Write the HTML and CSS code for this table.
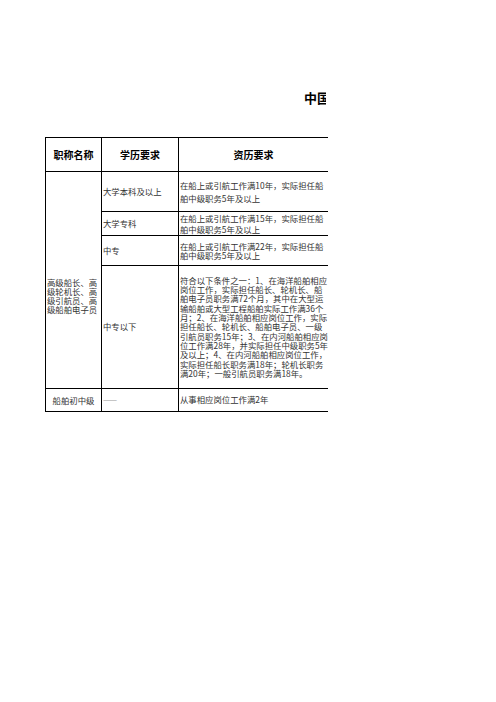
FILE: index.html
```html
<!DOCTYPE html>
<html lang="zh">
<head>
<meta charset="utf-8">
<title>中国船舶船员职称评审条件</title>
<link rel="stylesheet" href="styles.css">
</head>
<body>
<div class="sheet">
  <div class="title">中国船舶船员职称评审条件</div>
  <table class="grid">
    <colgroup>
      <col class="c-name">
      <col class="c-edu">
      <col class="c-exp">
    </colgroup>
    <thead>
      <tr class="r-head">
        <th>职称名称</th>
        <th>学历要求</th>
        <th>资历要求</th>
      </tr>
    </thead>
    <tbody>
      <tr class="r1">
        <td class="name" rowspan="4">高级船长、高<br>级轮机长、高<br>级引航员、高<br>级船舶电子员</td>
        <td class="edu">大学本科及以上</td>
        <td class="exp">在船上或引航工作满10年，实际担任船<br>舶中级职务5年及以上</td>
      </tr>
      <tr class="r2">
        <td class="edu">大学专科</td>
        <td class="exp">在船上或引航工作满15年，实际担任船<br>舶中级职务5年及以上</td>
      </tr>
      <tr class="r3">
        <td class="edu">中专</td>
        <td class="exp">在船上或引航工作满22年，实际担任船<br>舶中级职务5年及以上</td>
      </tr>
      <tr class="r4">
        <td class="edu">中专以下</td>
        <td class="exp">符合以下条件之一：1、在海洋船舶相应<br>岗位工作，实际担任船长、轮机长、船<br>舶电子员职务满72个月，其中在大型运<br>输船舶或大型工程船舶实际工作满36个<br>月；2、在海洋船舶相应岗位工作，实际<br>担任船长、轮机长、船舶电子员、一级<br>引航员职务15年；3、在内河船舶相应岗<br>位工作满28年，并实际担任中级职务5年<br>及以上；4、在内河船舶相应岗位工作，<br>实际担任船长职务满18年；轮机长职务<br>满20年；一般引航员职务满18年。</td>
      </tr>
      <tr class="r5">
        <td class="name center">船舶初中级</td>
        <td class="edu dash">——</td>
        <td class="exp">从事相应岗位工作满2年</td>
      </tr>
    </tbody>
  </table>
</div>
</body>
</html>
```

FILE: styles.css
```css
html, body {
  margin: 0;
  padding: 0;
  background: #ffffff;
}

body {
  font-family: "Noto Sans CJK SC", "Noto Sans", sans-serif;
  color: #222;
}

.sheet {
  width: 283px;
  margin-left: 45px;
  padding-top: 89px;
  overflow: hidden;
}

.title {
  width: 281px;
  box-sizing: border-box;
  padding-left: 259px;
  white-space: nowrap;
  overflow: hidden;
  font-size: 13px;
  font-weight: bold;
  line-height: 18px;
  height: 18px;
  color: #000;
  margin-bottom: 30px;
}

.grid {
  border-collapse: collapse;
  table-layout: fixed;
  width: 283px;
}

.c-name { width: 56px; }
.c-edu { width: 77px; }
.c-exp { width: 150px; }

.grid th,
.grid td {
  border: 1px solid #000;
  padding: 0 1px;
  vertical-align: middle;
  white-space: nowrap;
  overflow: hidden;
}

.grid th {
  font-size: 10px;
  font-weight: bold;
  color: #000;
  text-align: center;
  line-height: 12px;
}

.grid td {
  font-size: 8.4px;
  line-height: 9.3px;
  text-align: left;
  color: #333;
}

.r-head { height: 34px; }
.r1 { height: 40px; }
.r2 { height: 24px; }
.r3 { height: 30px; }
.r4 { height: 123px; }
.r5 { height: 23px; }

.r1 .exp { line-height: 12.3px; }
.r2 .exp { line-height: 10.7px; }
.r3 .exp { line-height: 9px; }

.grid td.name {
  line-height: 9px;
  padding-top: 31px;
}

.grid td.center {
  text-align: center;
  padding-top: 0;
}

.grid td.dash { color: #999; }
```
